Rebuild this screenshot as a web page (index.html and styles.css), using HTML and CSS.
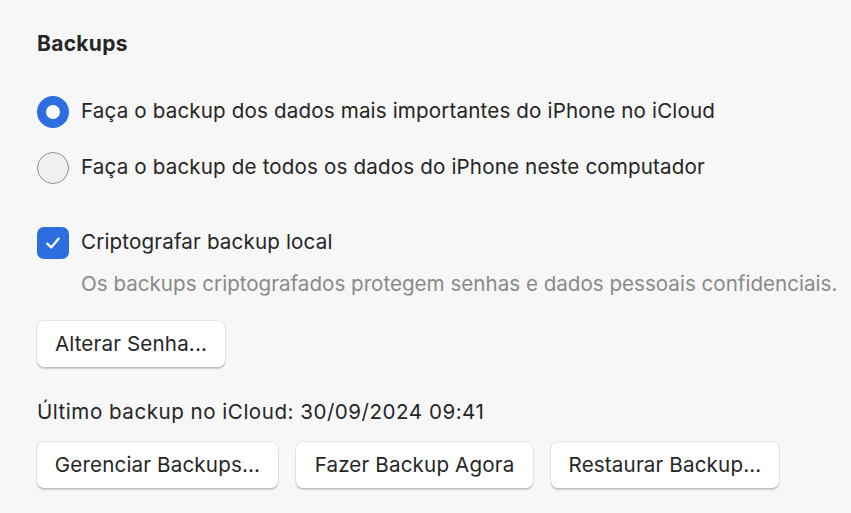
FILE: index.html
```html
<!DOCTYPE html>
<html lang="pt-BR">
<head>
<meta charset="utf-8">
<link rel="stylesheet" href="styles.css">
</head>
<body>
<main class="panel">
  <h2 class="title">Backups</h2>
  <div class="options">
    <label class="option">
      <span class="radio radio-on"></span>
      <span class="label">Faça o backup dos dados mais importantes do iPhone no iCloud</span>
    </label>
    <label class="option">
      <span class="radio"></span>
      <span class="label">Faça o backup de todos os dados do iPhone neste computador</span>
    </label>
  </div>
  <div class="encrypt">
    <label class="option">
      <span class="checkbox">
        <svg viewBox="0 0 32 32" width="32" height="32"><path d="M10.3 16.6 L14.2 20.4 L21.7 11.6" fill="none" stroke="#fff" stroke-width="2.3" stroke-linecap="round" stroke-linejoin="round"/></svg>
      </span>
      <span class="label">Criptografar backup local</span>
    </label>
    <p class="hint">Os backups criptografados protegem senhas e dados pessoais confidenciais.</p>
  </div>
  <div class="row">
    <button class="btn btn-pass">Alterar Senha...</button>
  </div>
  <p class="last">Último backup no iCloud: 30/09/2024 09:41</p>
  <div class="row actions">
    <button class="btn btn-manage">Gerenciar Backups...</button>
    <button class="btn btn-now">Fazer Backup Agora</button>
    <button class="btn btn-restore">Restaurar Backup...</button>
  </div>
</main>
</body>
</html>
```
FILE: styles.css
```css
html, body {
  margin: 0;
  padding: 0;
  background: #f7f7f7;
}
body {
  font-family: Inter, "Noto Sans", sans-serif;
  color: #262626;
  width: 851px;
  height: 513px;
  overflow: hidden;
}
.panel {
  padding: 30px 0 0 37px;
  display: flex;
  flex-direction: column;
}
.title {
  margin: 0;
  font-size: 21px;
  font-weight: 700;
  line-height: 28px;
  letter-spacing: 0.3px;
}
.options {
  margin-top: 38px;
  display: flex;
  flex-direction: column;
  gap: 24px;
}
.option {
  display: flex;
  align-items: center;
  gap: 12px;
  height: 32px;
}
.label, .hint, .last, .btn {
  font-size: 20.6px;
  letter-spacing: 0.15px;
}
.label {
  line-height: 24px;
  margin-top: -2px;
}
.radio {
  width: 32px;
  height: 32px;
  box-sizing: border-box;
  border-radius: 50%;
  border: 1.5px solid #8e8e8e;
  background: #f0f0f0;
  flex: none;
}
.radio-on {
  border: 9px solid #2c6ee0;
  background: #fff;
}
.encrypt {
  margin-top: 43px;
  display: flex;
  flex-direction: column;
}
.checkbox {
  width: 32px;
  height: 32px;
  border-radius: 7px;
  background: #2c6ee0;
  flex: none;
  display: flex;
}
.hint {
  margin: 13px 0 0 44px;
  line-height: 24px;
  color: #8a8a8a;
  letter-spacing: 0;
}
.row {
  display: flex;
  gap: 18px;
}
.btn {
  font-family: inherit;
  color: #262626;
  background: #fff;
  border: none;
  border-radius: 7px;
  height: 46px;
  padding: 0 0 2px 0;
  box-shadow: 0 0 0 0.8px rgba(0,0,0,0.08), 0 1.2px 1.5px rgba(0,0,0,0.18);
}
.btn-pass { margin-top: 25px; width: 188px; }
.last {
  margin: 33px 0 0 0;
  line-height: 24px;
  letter-spacing: 0.5px;
}
.actions { margin-top: 18px; }
.btn-manage { width: 241px; }
.btn-now { width: 237px; }
.btn-restore { width: 228px; }
```
